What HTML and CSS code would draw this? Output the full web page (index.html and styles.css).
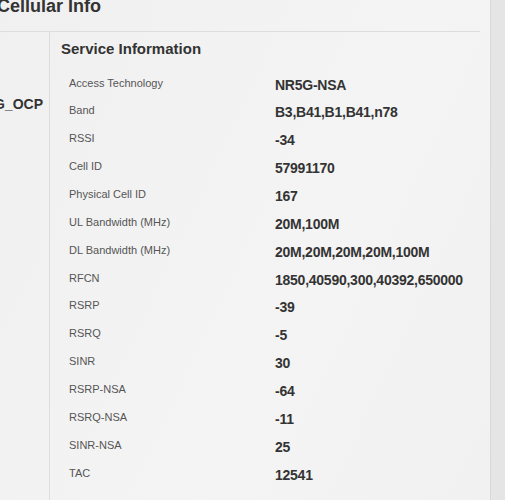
FILE: index.html
```html
<!DOCTYPE html>
<html>
<head>
  <title>Cellular Info</title>
  <link rel="stylesheet" href="styles.css">
</head>
<body>
  <div class="page">
    <div class="panel">
      <h2 class="panel-title">Cellular Info</h2>
      <div class="panel-body">
        <div class="side">
          <div class="side-name">G_OCP</div>
        </div>
        <div class="main">
          <h3 class="section-title">Service Information</h3>
          <div class="info">
            <div class="label">Access Technology</div><div class="value">NR5G-NSA</div>
            <div class="label">Band</div><div class="value">B3,B41,B1,B41,n78</div>
            <div class="label">RSSI</div><div class="value">-34</div>
            <div class="label">Cell ID</div><div class="value">57991170</div>
            <div class="label">Physical Cell ID</div><div class="value">167</div>
            <div class="label">UL Bandwidth (MHz)</div><div class="value">20M,100M</div>
            <div class="label">DL Bandwidth (MHz)</div><div class="value">20M,20M,20M,20M,100M</div>
            <div class="label">RFCN</div><div class="value">1850,40590,300,40392,650000</div>
            <div class="label">RSRP</div><div class="value">-39</div>
            <div class="label">RSRQ</div><div class="value">-5</div>
            <div class="label">SINR</div><div class="value">30</div>
            <div class="label">RSRP-NSA</div><div class="value">-64</div>
            <div class="label">RSRQ-NSA</div><div class="value">-11</div>
            <div class="label">SINR-NSA</div><div class="value">25</div>
            <div class="label">TAC</div><div class="value">12541</div>
          </div>
        </div>
      </div>
    </div>
    <div class="scroll-gutter"></div>
  </div>
</body>
</html>
```

FILE: styles.css
```css
html, body {
  margin: 0;
  height: 100%;
  overflow: hidden;
}

body {
  font-family: "Liberation Sans", Arial, sans-serif;
  background-color: #e5e5e5;
  color: #333;
}

.page {
  display: flex;
  height: 100%;
}

.panel {
  width: 490px;
  flex: none;
  display: flex;
  flex-direction: column;
  background: linear-gradient(115deg, #f0f0f0 0%, #f3f3f3 45%, #f4f4f4 60%, #f1f1f1 100%);
  border-right: 1px solid #d9d9d9;
}

.scroll-gutter {
  flex: 1;
  background-color: #e5e5e5;
}

.panel-title {
  flex: none;
  margin: -4px 0 0 -3px;
  width: 483px;
  height: 36px;
  box-sizing: border-box;
  font-size: 18px;
  line-height: 20px;
  font-weight: bold;
  color: #333;
  border-bottom: 1px solid #dddddd;
}

.panel-body {
  flex: 1;
  display: flex;
}

.side {
  width: 49px;
  flex: none;
  border-right: 1px solid #dddddd;
  padding-top: 64px;
  text-align: right;
}

.side-name {
  margin-right: 6px;
  font-size: 14px;
  line-height: 16px;
  font-weight: bold;
  white-space: nowrap;
  direction: rtl;
}

.main {
  flex: 1;
  padding-left: 11px;
}

.section-title {
  margin: 8px 0 0 0;
  font-size: 15px;
  line-height: 18px;
  font-weight: bold;
  color: #333;
}

.info {
  display: grid;
  grid-template-columns: 206px 1fr;
  grid-auto-rows: 27.86px;
  margin-top: 18.5px;
  padding-left: 8px;
}

.label {
  font-size: 11px;
  line-height: 13px;
  color: #555;
}

.value {
  font-size: 14px;
  line-height: 16px;
  font-weight: bold;
  letter-spacing: -0.25px;
  color: #333;
}
```
